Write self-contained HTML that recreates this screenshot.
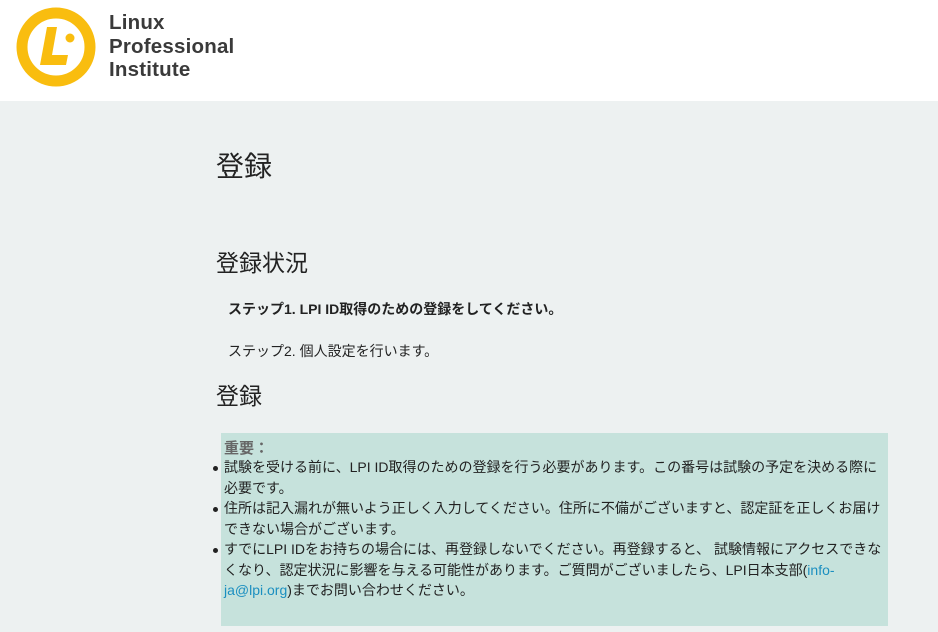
<!DOCTYPE html>
<html><head><meta charset="utf-8"><style>
body{margin:0;width:938px;height:632px;background:#edf1f1;font-family:"Liberation Sans","Noto Sans CJK JP",sans-serif;color:#222;overflow:hidden;position:relative}
.hdr{position:absolute;left:0;top:0;width:938px;height:101px;background:#fff}
.logo-t{position:absolute;left:109px;top:11px;font-size:20.5px;line-height:23.5px;color:#3a3a3a;font-weight:bold;font-family:"Liberation Sans",sans-serif;letter-spacing:0.2px}
.a{position:absolute;white-space:nowrap}
.box{position:absolute;left:221px;top:433px;width:667px;height:193px;background:#c6e2dc}
.box ul{margin:0;padding:0 0 0 3px;list-style:none;font-size:14px;line-height:20.5px;color:#222}
.box li{position:relative;padding-left:0}
.box li:before{content:"";position:absolute;left:-11px;top:9px;width:5px;height:5px;border-radius:50%;background:#222}
a{color:#1b8fc0;text-decoration:none}
</style></head><body>
<div class="hdr">
<svg style="position:absolute;left:16px;top:7px" width="80" height="80" viewBox="0 0 80 80">
<circle cx="40" cy="40" r="34" fill="none" stroke="#f9bd0f" stroke-width="11"/>
<path d="M31 20 L41 20 L36 48 L52 48 L50 58 L24 58 Z" fill="#f9bd0f"/>
<circle cx="54" cy="31" r="4.5" fill="#f9bd0f"/>
</svg>
<div class="logo-t">Linux<br>Professional<br>Institute</div>
</div>
<div class="a" style="left:216px;top:145px;font-size:28px">登録</div>
<div class="a" style="left:216px;top:244px;font-size:23px">登録状況</div>
<div class="a" style="left:228px;top:299px;font-size:14px;font-weight:bold">ステップ1. LPI ID取得のための登録をしてください。</div>
<div class="a" style="left:228px;top:341px;font-size:14px">ステップ2. 個人設定を行います。</div>
<div class="a" style="left:216px;top:377px;font-size:23px">登録</div>
<div class="box">
<div style="position:absolute;left:3px;top:4px;font-size:15px;font-weight:bold;color:#666">重要：</div>
<ul style="position:absolute;left:0;top:24px;width:662px">
<li>試験を受ける前に、LPI ID取得のための登録を行う必要があります。この番号は試験の予定を決める際に必要です。</li>
<li>住所は記入漏れが無いよう正しく入力してください。住所に不備がございますと、認定証を正しくお届けできない場合がございます。</li>
<li>すでにLPI IDをお持ちの場合には、再登録しないでください。再登録すると、 試験情報にアクセスできなくなり、認定状況に影響を与える可能性があります。ご質問がございましたら、LPI日本支部(<a>info-ja@lpi.org</a>)までお問い合わせください。</li>
</ul>
</div>
</body></html>
